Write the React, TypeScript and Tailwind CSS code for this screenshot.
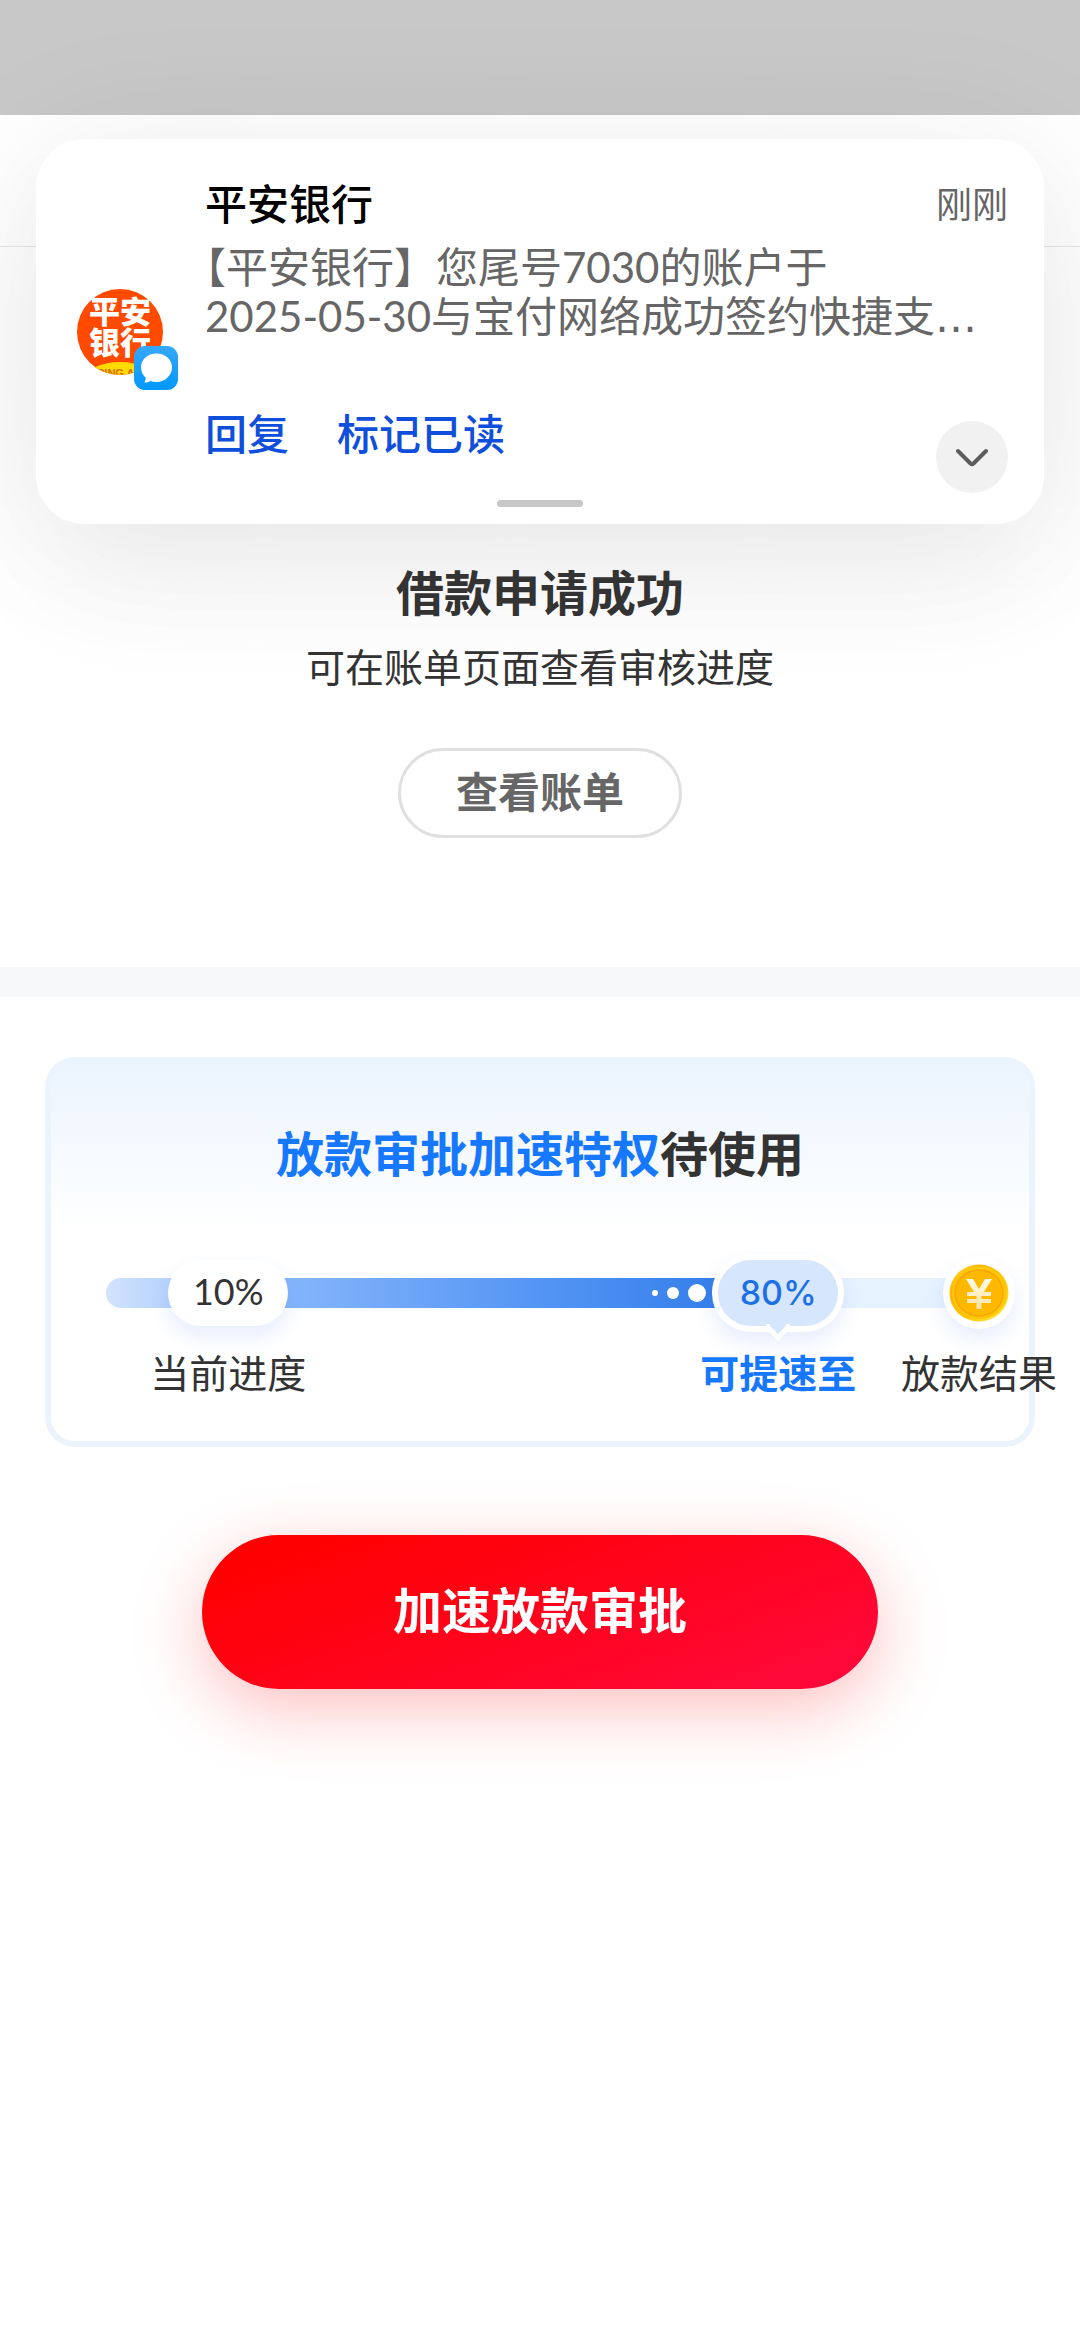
import type { ReactNode } from "react";

function BankLogo() {
  return (
    <svg viewBox="0 0 102 102" className="size-[102px] shrink-0 overflow-visible" role="img" aria-label="平安银行">
      <defs>
        <clipPath id="logo-clip">
          <circle cx="43" cy="43" r="43" />
        </clipPath>
        <linearGradient id="sms-bg" x1="0" y1="0" x2="0" y2="1">
          <stop offset="0" stopColor="#36a8fb" />
          <stop offset="1" stopColor="#0398fd" />
        </linearGradient>
      </defs>
      <g clipPath="url(#logo-clip)">
        <rect width="86" height="86" fill="#ff4a00" />
        <ellipse cx="43" cy="92" rx="36" ry="19" fill="#fedc00" />
        <text x="20" y="88" fontFamily="'Liberation Sans', sans-serif" fontWeight="700" fontSize="11" fill="#d96a00">
          PING AN
        </text>
      </g>
      <g fontFamily="'Noto Sans CJK SC', sans-serif" fontWeight="900" fontSize="31" fill="#fff">
        <text x="12" y="34">平安</text>
        <text x="12" y="65">银行</text>
      </g>
      <rect x="57" y="57" width="44" height="44" rx="11" fill="url(#sms-bg)" />
      <path
        d="M79.500 64.500c-8.800 0-15.500 6-15.500 13.700 0 4.600 2 8.100 4.800 10.600-.3 2-.8 3.600-1.300 5 2.200-.1 4.200-.8 5.900-1.800 1.900.6 4 .9 6.100.9 8.800 0 15.500-6.800 15.500-14.700s-6.700-13.700-15.500-13.700z"
        fill="#fff"
      />
    </svg>
  );
}

function Coin() {
  return (
    <svg viewBox="0 0 60 58" className="h-[58px] w-[60px]" aria-hidden="true">
      <defs>
        <linearGradient id="coin-edge" x1="0" y1="0" x2="1" y2="1">
          <stop offset="0" stopColor="#ffe94a" />
          <stop offset="0.25" stopColor="#ffb400" />
          <stop offset="0.6" stopColor="#ffc400" />
          <stop offset="1" stopColor="#fff04a" />
        </linearGradient>
        <linearGradient id="coin-yen" x1="0" y1="0" x2="0" y2="1">
          <stop offset="0" stopColor="#fffbe8" />
          <stop offset="1" stopColor="#ffe3a6" />
        </linearGradient>
      </defs>
      <ellipse cx="30" cy="29" rx="29.500" ry="28.500" fill="url(#coin-edge)" />
      <ellipse cx="30.500" cy="28.500" rx="27.500" ry="26.500" fill="#ffc60a" />
      <ellipse cx="30" cy="29" rx="24" ry="23" fill="#ffb800" stroke="#f7a500" strokeWidth="1.500" />
      <path
        d="M17 15h7l6 10 6-10h7l-8 13h7v4H32.500v3H42v4h-9.500v6h-5v-6H18v-4h9.500v-3H18v-4h7z"
        fill="url(#coin-yen)"
      />
    </svg>
  );
}

function Notification() {
  return (
    <section
      aria-label="通知"
      className="absolute inset-x-9 top-[139px] flex h-[385px] items-center rounded-[48px] bg-white pl-[41px] pr-9 shadow-[0_10px_150px_rgba(0,0,0,0.08),0_70px_130px_rgba(0,0,0,0.04)]"
    >
      <div className="pt-4">
        <BankLogo />
      </div>
      <div className="ml-[26px] flex min-w-0 grow flex-col self-stretch pt-9">
        <div className="flex items-center justify-between">
          <h2 className="text-[42px] font-medium leading-[58px] text-black">平安银行</h2>
          <time className="text-[36px] leading-[58px] text-[#666]">刚刚</time>
        </div>
        <p className="mt-[10px] whitespace-nowrap text-[42px] leading-[49px] text-[#666] [text-spacing-trim:trim-start]">
          【平安银行】您尾号7030的账户于
          <br />
          2025-05-30与宝付网络成功签约快捷支<span className="font-['DejaVu_Sans'] leading-none">…</span>
        </p>
        <div className="mt-20 flex items-start justify-between">
          <div className="-mt-4 flex gap-12 text-[42px] font-medium leading-[58px] text-[#0f4fdc]">
            <button type="button">回复</button>
            <button type="button">标记已读</button>
          </div>
          <button
            type="button"
            aria-label="展开"
            className="flex size-[72px] items-center justify-center rounded-full bg-[#f1f1f1]"
          >
            <svg viewBox="0 0 36 24" className="h-6 w-9" fill="none" stroke="#5c5c5c" strokeWidth="4" strokeLinecap="round" strokeLinejoin="round">
              <path d="M4 6l12.500 12.500q1.500 1.500 3 0L32 6" />
            </svg>
          </button>
        </div>
      </div>
      <div className="absolute bottom-[17px] left-1/2 h-[7px] w-[86px] -translate-x-1/2 rounded-full bg-[#c8c8c8]" />
    </section>
  );
}

function Marker({ place, label, children }: { place: string; label: ReactNode; children: ReactNode }) {
  return (
    <div className={`absolute top-1/2 flex -translate-x-1/2 flex-col items-center ${place}`}>
      <div className="-mt-[39px] flex h-[78px] items-center justify-center">{children}</div>
      <div className="mt-[14px] whitespace-nowrap text-[39px] leading-[54px]">{label}</div>
    </div>
  );
}

function Progress() {
  return (
    <div className="relative ml-[55px] mr-[50px] mt-[89px] h-[30px] rounded-full bg-[#e6f2fe]">
      <div className="flex h-full w-[77%] items-center justify-end gap-[9px] rounded-l-full bg-[linear-gradient(90deg,#d2e3fd_0%,#86b6fb_26%,#4a8ff2_72%,#2c76e6_100%)] pr-[72px]">
        <span className="size-[6px] rounded-full bg-white" />
        <span className="size-3 rounded-full bg-white" />
        <span className="size-[18px] rounded-full bg-white" />
      </div>
      <Marker place="left-[14%]" label="当前进度">
        <div className="flex h-[66px] w-[120px] items-center justify-center rounded-full bg-white pb-1 text-[36px] leading-none shadow-[0_10px_20px_rgba(60,110,240,0.12)]">
          10%
        </div>
      </Marker>
      <Marker place="left-[77%]" label={<strong className="font-bold text-[#1677ff]">可提速至</strong>}>
        <div className="relative flex h-[78px] w-[132px] items-center justify-center rounded-full border-[6px] border-white bg-[#d6e6fd] text-[34px] font-medium leading-none text-[#1c70e6] shadow-[0_10px_20px_rgba(60,110,240,0.12)]">
          <span className="font-['Inter']">80%</span>
          <svg viewBox="0 0 24 18" className="absolute -bottom-4 left-1/2 h-[18px] w-6 -translate-x-1/2" aria-hidden="true">
            <path d="M0 6h2l10 12L22 6h2V0H0z" fill="#fff" />
            <path d="M4 0v2l8 8 8-8V0z" fill="#d6e6fd" />
          </svg>
        </div>
      </Marker>
      <Marker place="left-full" label="放款结果">
        <div className="flex size-[72px] items-center justify-center rounded-full bg-white shadow-[0_10px_20px_rgba(60,110,240,0.12)]">
          <Coin />
        </div>
      </Marker>
    </div>
  );
}

export default function App() {
  return (
    <div
      lang="zh-CN"
      className="relative min-h-screen overflow-x-hidden bg-white font-['Lato','Noto_Sans_CJK_SC',sans-serif] text-[#333]"
    >
      <div className="h-[115px] bg-[#c8c8c8]" />
      <header className="h-[132px] border-b border-[#e6e6e6]" />
      <Notification />

      <main className="relative">
        <section className="flex h-[720px] flex-col items-center pt-[311px]">
          <h1 className="text-[48px] font-bold leading-[70px]">借款申请成功</h1>
          <p className="mt-3 text-[39px] leading-[54px]">可在账单页面查看审核进度</p>
          <button
            type="button"
            className="mt-[54px] h-[90px] rounded-full border-[3px] border-[#e0e0e0] bg-white px-[55px] pb-[2px] text-[42px] font-bold leading-none text-[#666]"
          >
            查看账单
          </button>
        </section>

        <div className="h-[30px] bg-[#f7f8fa]" />

        <section className="mx-[45px] mt-[60px] h-[390px] rounded-[30px] border-[6px] border-[#ebf4fd] bg-[linear-gradient(180deg,#ebf4fe_0%,#ffffff_45%)] pt-14">
          <h2 className="text-center text-[48px] font-bold leading-[70px]">
            <span className="text-[#1677ff]">放款审批加速特权</span>待使用
          </h2>
          <Progress />
        </section>

        <div className="mt-[88px] flex justify-center">
          <button
            type="button"
            className="h-[154px] w-[676px] rounded-full bg-[linear-gradient(160deg,#ff0000_10%,#ff0838_90%)] pb-1 text-[49px] font-bold leading-none text-white shadow-[0_20px_70px_rgba(255,0,0,0.25)]"
          >
            加速放款审批
          </button>
        </div>
      </main>
    </div>
  );
}
